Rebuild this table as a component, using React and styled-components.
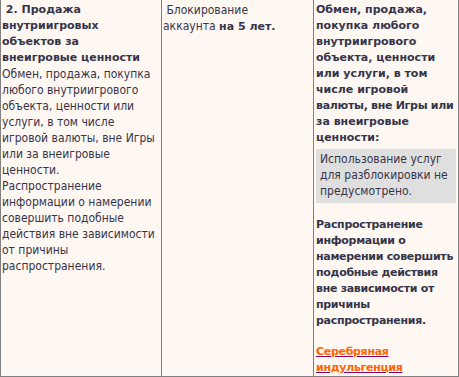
import React from 'react'
import styled, { createGlobalStyle } from 'styled-components'

const Global = createGlobalStyle`
    body {
        margin: 0;
        background: #fff7f2;
        font-family: "DejaVu Sans Condensed", "DejaVu Sans", Verdana, sans-serif;
        font-stretch: condensed;
    }

    b {
        font-family: "DejaVu Sans", Verdana, sans-serif;
        font-stretch: normal;
        font-size: 11px;
    }
`

const Table = styled.div`
    display: grid;
    grid-template-columns: 160px 152px 1fr;
    width: 459px;
    min-height: 377px;
    box-sizing: border-box;
    border-left: 1px solid #808080;
    border-right: 1px solid #808080;
    border-bottom: 1px solid #808080;
    background: #fff7f2;
    color: #35354a;
    font-size: 12px;
    line-height: 16px;
`

const Cell = styled.div`
    padding: 2px ${p => p.$right || 0}px 0 ${p => p.$left || 1}px;
    border-left: ${p => (p.$first ? 'none' : '1px solid #808080')};
`

// bold blocks: own line box so the 11px bold keeps the 16px rhythm
const Title = styled.b`
    display: block;
    margin: 0 0 ${p => p.$gap || 0}px;
    letter-spacing: ${p => (p.$tight ? '-0.3px' : 'normal')};
`

const Tight = styled.span`
    letter-spacing: -0.3px;
`

const Note = styled.div`
    background: #dfdfdf;
    margin: 3px 2px 14px 0;
    padding: 2px 4px 4px;
`

const Link = styled.a`
    display: block;
    color: #800080;
    font-family: "DejaVu Sans", Verdana, sans-serif;
    font-stretch: normal;
    font-size: 11px;
    font-weight: bold;
    letter-spacing: -0.3px;
    text-decoration: underline;

    span {
        color: #ff6600;
    }
`

const App = () => {
    return (
        <>
            <Global />
            <Table>
                <Cell $first $right={5}>
                    <Title>{'\u00a02. Продажа внутриигровых объектов за внеигровые ценности'}</Title>
                    Обмен, продажа, покупка любого внутриигрового объекта, ценности или услуги, в том числе игровой валюты, вне Игры или за внеигровые ценности. Распространение информации о намерении совершить подобные действия вне зависимости от причины распространения.
                </Cell>
                <Cell $right={16}>
                    {'\u00a0Блокирование аккаунта '}<b>на 5 лет.</b>
                </Cell>
                <Cell $left={2}>
                    <Title>
                        Обмен, продажа, покупка любого внутриигрового объекта, ценности или услуги, в том числе игровой{' '}
                        <Tight>валюты, вне Игры или</Tight> за внеигровые ценности:
                    </Title>
                    <Note>Использование услуг для разблокировки не предусмотрено.</Note>
                    <Title $gap={15} $tight>Распространение информации о намерении совершить подобные действия вне зависимости от причины распространения.</Title>
                    <Link href="#"><span>Серебряная индульгенция</span></Link>
                </Cell>
            </Table>
        </>
    )
}

export default App
